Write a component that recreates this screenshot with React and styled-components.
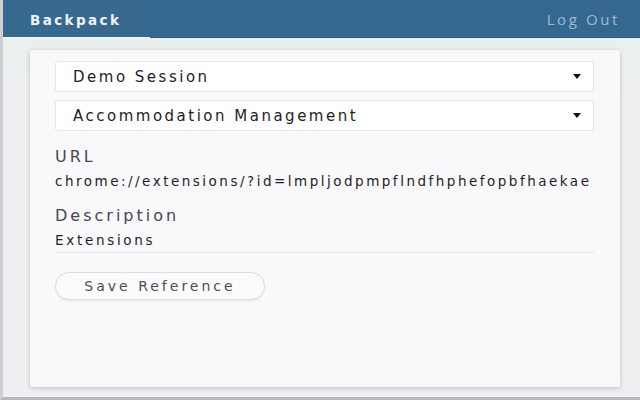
import React from 'react'
import styled, { createGlobalStyle } from 'styled-components'

const GlobalStyle = createGlobalStyle`
  html, body {
    margin: 0;
    padding: 0;
    background: #efeef1;
  }
  body {
    font-family: 'DejaVu Sans', Verdana, sans-serif;
  }
`

const Frame = styled.div`
  width: 640px;
  height: 400px;
  box-sizing: border-box;
  display: flex;
  flex-direction: column;
  border-left: 3px solid #cfcfd3;
  border-bottom: 3px solid #b9b9bd;
  background: #efeef1;
  overflow: hidden;
`
const Header = styled.div`
  height: 37px;
  flex-shrink: 0;
  display: flex;
  align-items: stretch;
  justify-content: space-between;
  background: #346890;
  border-bottom: 1px solid #2a5778;
  margin-left: -3px;
  padding-left: 3px;
`
const Tab = styled.div`
  width: 147px;
  display: flex;
  align-items: center;
  padding-left: 27px;
  box-sizing: border-box;
  color: #eef3f8;
  font-size: 13.5px;
  font-weight: bold;
  letter-spacing: 2.4px;
  background: #37698f;
  box-shadow: inset 0 -2px 0 #f4f7f8;
  margin-bottom: -2px;
`
const LogOut = styled.a`
  align-self: center;
  margin-right: 20px;
  color: #a0bad0;
  font-family: 'Open Sans', sans-serif;
  font-size: 15px;
  letter-spacing: 2.6px;
  cursor: pointer;
`
const Band = styled.div`
  height: 12px;
  flex-shrink: 0;
  background: #e9f0ee;
`
const Body = styled.div`
  flex: 1;
  display: flex;
  padding: 0 20px 10px 27px;
  background: linear-gradient(#e9f0ee 0, #efeef1 40px);
`
const Card = styled.div`
  flex: 1;
  display: flex;
  flex-direction: column;
  padding: 11px 26px 0 25px;
  background: #f9f8fb;
  border-radius: 2px;
  box-shadow: 0 1px 4px rgba(0, 0, 0, 0.22);
`
const Select = styled.div`
  height: 31px;
  box-sizing: border-box;
  display: flex;
  align-items: center;
  justify-content: space-between;
  padding: 0 12px 0 17px;
  margin-bottom: ${(p) => p.gap || 0}px;
  background: #fff;
  border: 1px solid #e4e4e9;
  border-radius: 3px;
  color: #1e1e24;
  font-size: 15px;
  letter-spacing: 2.5px;
`
const Caret = styled.span`
  width: 0;
  height: 0;
  border-left: 4.5px solid transparent;
  border-right: 4.5px solid transparent;
  border-top: 5px solid #111;
`
const Label = styled.div`
  margin-top: ${(p) => p.top}px;
  color: #474750;
  font-size: 16px;
  letter-spacing: 3px;
  line-height: 18px;
`
const Value = styled.div`
  margin-top: ${(p) => p.top}px;
  color: #1f1f26;
  font-size: 13.5px;
  line-height: 16px;
  letter-spacing: ${(p) => p.spacing}px;
  white-space: nowrap;
  overflow: hidden;
`
const Divider = styled.div`
  margin-top: 4px;
  height: 1px;
  background: #e6e6ea;
`
const Button = styled.button`
  align-self: flex-start;
  margin-top: 19px;
  width: 210px;
  height: 28px;
  padding: 0;
  border: 1px solid #dcdce0;
  border-radius: 14px;
  background: #fbfbfc;
  box-shadow: 0 1px 2px rgba(0, 0, 0, 0.08);
  color: #4d4d56;
  font-family: 'DejaVu Sans', Verdana, sans-serif;
  font-size: 14px;
  letter-spacing: 3px;
  cursor: pointer;
`

export default function App() {
  return (
    <Frame>
      <GlobalStyle />
      <Header>
        <Tab>Backpack</Tab>
        <LogOut>Log Out</LogOut>
      </Header>
      <Band />
      <Body>
        <Card>
          <Select gap={8}>
            Demo Session
            <Caret />
          </Select>
          <Select>
            Accommodation Management
            <Caret />
          </Select>
          <Label top={17}>URL</Label>
          <Value top={7} spacing={2.5}>
            chrome://extensions/?id=lmpljodpmpflndfhphefopbfhaekae
          </Value>
          <Label top={18}>Description</Label>
          <Value top={7} spacing={2.7}>
            Extensions
          </Value>
          <Divider />
          <Button>Save Reference</Button>
        </Card>
      </Body>
    </Frame>
  )
}
